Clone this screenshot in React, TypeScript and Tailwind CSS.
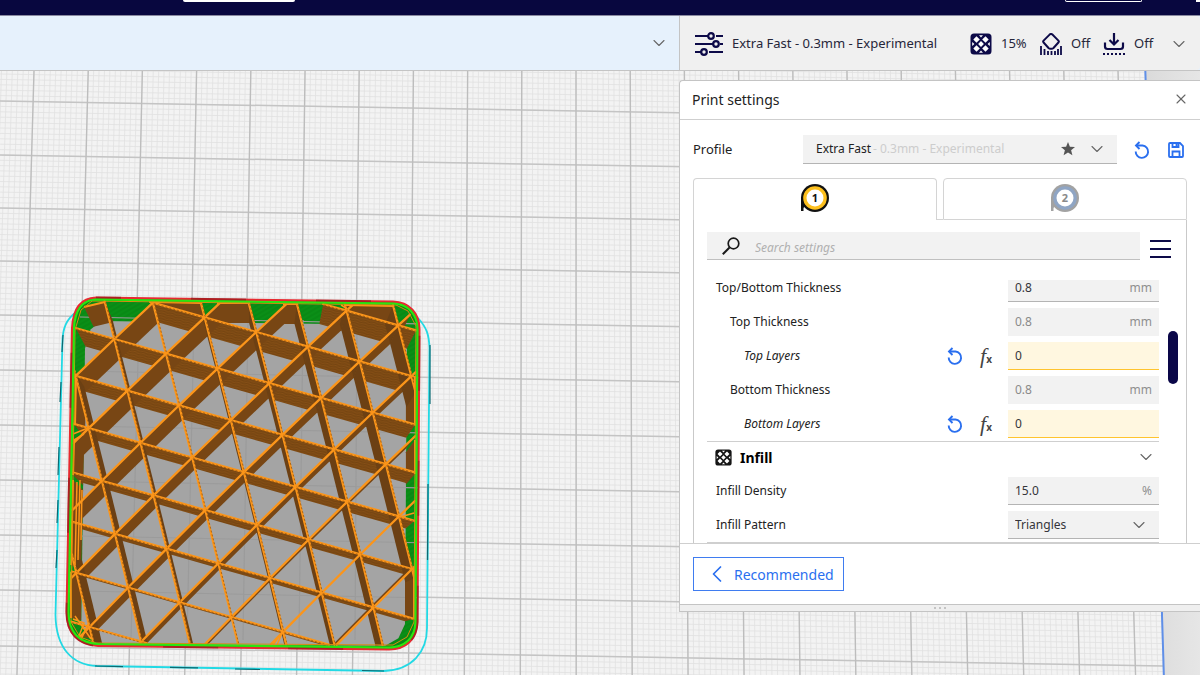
import React from 'react';
import { ChevronDown, ChevronLeft, X } from 'lucide-react';

type Point = [number, number];

/* ---------- Build plate ---------- */

const majorRows = [47, 101, 155, 208, 261, 315, 370, 425, 480, 535, 590, 646, 702];
const ROW_SLOPE = 0.0172;

const columnX = (k: number, y: number) => 34 + 54.2 * k + ((y - 71) * (1.55 * k - 15.3)) / 541;

const plateEdge = (y: number) => 1145 + (y - 71) * 0.0315;

const rowPath = (y: number) => {
  const end = plateEdge(y);
  return `M0 ${y.toFixed(1)}L${end.toFixed(1)} ${(y + end * ROW_SLOPE).toFixed(1)}`;
};

const columnPath = (k: number) => `M${columnX(k, 60).toFixed(1)} 60L${columnX(k, 680).toFixed(1)} 680`;

const majorColumns = Array.from({ length: 22 }, (_, i) => i - 1);
const minorColumns = Array.from({ length: 215 }, (_, i) => (i - 9) / 10);
const minorRows = majorRows.slice(0, -1).flatMap((y, i) =>
  Array.from({ length: 10 }, (_, n) => y + ((majorRows[i + 1] - y) * n) / 10)
);

/* ---------- Sliced model ---------- */

// Inner wall of the part, clockwise from the top left
const outline: Point[] = [
  [92, 301], [396, 305], [408, 311], [416, 326], [414, 622], [407, 637], [393, 645],
  [96, 643], [80, 637], [71, 622], [75, 330], [81, 310],
];

const node = (i: number, j: number): Point => [
  114.3 + 51.7 * i + 13.1 * j,
  339 + 14.7 * i + 51.4 * j + 0.25 * j * j,
];

// Position of the same point on the plate, below the top layer
const base = ([x, y]: Point): Point => [x + (253 - x) * 0.056, y + (659 - y) * 0.056];

// Keeps the part of a segment that is inside the convex outline
const clip = (a: Point, b: Point): [Point, Point] | null => {
  let from = 0;
  let to = 1;
  const dx = b[0] - a[0];
  const dy = b[1] - a[1];
  for (let n = 0; n < outline.length; n++) {
    const p = outline[n];
    const q = outline[(n + 1) % outline.length];
    const nx = -(q[1] - p[1]);
    const ny = q[0] - p[0];
    const distance = (a[0] - p[0]) * nx + (a[1] - p[1]) * ny;
    const speed = dx * nx + dy * ny;
    if (speed === 0) {
      if (distance < 0) return null;
      continue;
    }
    const t = -distance / speed;
    if (speed > 0) from = Math.max(from, t);
    else to = Math.min(to, t);
  }
  if (from >= to) return null;
  return [
    [a[0] + dx * from, a[1] + dy * from],
    [a[0] + dx * to, a[1] + dy * to],
  ];
};

const points = (list: Point[]) => list.map(([x, y]) => `${x.toFixed(1)},${y.toFixed(1)}`).join(' ');

const range = (from: number, to: number) => Array.from({ length: to - from + 1 }, (_, i) => from + i);

type WallKind = 'row' | 'steep' | 'diagonal';

interface Wall {
  a: Point;
  b: Point;
  kind: WallKind;
}

// One wall per cell edge, from each node to its neighbour
const makeWalls = (kind: WallKind, di: number, dj: number): Wall[] =>
  range(-4, 9).flatMap((j) =>
    range(-6, 9).flatMap((i) => {
      const part = clip(node(i, j), node(i + di, j + dj));
      return part ? [{ a: part[0], b: part[1], kind }] : [];
    })
  );

const walls: Wall[] = [
  ...makeWalls('row', 1, 0),
  ...makeWalls('diagonal', -1, 1),
  ...makeWalls('steep', 0, 1),
];

// Stretches where the infill runs along the inner wall
const rim: [Point, Point][] = [
  [[84, 307], [105, 302]],
  [[153, 302], [202, 303]],
  [[217, 303], [250, 303]],
  [[283, 304], [298, 304]],
  [[345, 305], [394, 306]],
  [[415, 376], [415, 424]],
  [[415, 440], [415, 474]],
  [[414, 568], [414, 618]],
  [[76, 378], [75, 425]],
  [[74, 440], [73, 475]],
  [[73, 480], [71, 565]],
  [[71, 572], [71, 618]],
];

const wallFill = { row: 'url(#wall-row)', steep: '#6c4014', diagonal: 'url(#wall-diagonal)' };

const shell = 'M96 298.5L393 302.5C409 303 418.500 314 418.500 329L416.500 622C416 639 405 649 388 648.500L98 645C80 644 67.500 634 67.500 612L73 328C74 309 82 299 96 298.5Z';

const BuildPlate: React.FC = () => (
  <svg
    className="absolute inset-0 h-full w-full"
    viewBox="0 71 1200 604"
    preserveAspectRatio="xMinYMin slice"
    role="img"
    aria-label="Layer preview of the sliced model"
  >
    <defs>
      <linearGradient id="outside" x1="0" x2="1">
        <stop offset="0" stopColor="#dadada" />
        <stop offset="1" stopColor="#e6e6e6" />
      </linearGradient>
      <pattern id="wall-row" width="9" height="5" patternUnits="userSpaceOnUse" patternTransform="rotate(14)">
        <rect width="9" height="5" fill="#764511" />
        <path d="M0 1q4.500 2 9 0M0 3.500q4.500 2 9 0" stroke="#8c5318" strokeWidth="0.8" fill="none" />
      </pattern>
      <pattern id="wall-diagonal" width="8" height="4" patternUnits="userSpaceOnUse" patternTransform="rotate(-43)">
        <rect width="8" height="4" fill="#724212" />
        <path d="M0 1h8M0 3h8" stroke="#824d16" strokeWidth="0.7" />
      </pattern>
      <pattern id="green-wall" width="6" height="4" patternUnits="userSpaceOnUse" patternTransform="rotate(-30)">
        <rect width="6" height="4" fill="#0a8f17" />
        <path d="M0 1h6" stroke="#088012" strokeWidth="0.8" />
      </pattern>
      <clipPath id="part">
        <path d={shell} />
      </clipPath>
    </defs>

    <rect y="60" width="1200" height="620" fill="#f3f3f3" />
    <path d={minorRows.map(rowPath).join('')} stroke="#e1e1e1" strokeWidth="0.8" />
    <path d={minorColumns.map(columnPath).join('')} stroke="#e1e1e1" strokeWidth="0.8" />
    <path d={majorRows.map(rowPath).join('')} stroke="#c4c4c4" strokeWidth="1.5" />
    <path d={majorColumns.map(columnPath).join('')} stroke="#bdbdbd" strokeWidth="1.4" />
    <path d="M1145 60L1164 680H1200V60Z" fill="url(#outside)" />
    <path d="M1145 60L1164 680" stroke="#5f8fe8" strokeWidth="2" />

    {/* Skirt */}
    <g fill="none">
      <path
        d="M76 312C66 320 63 328 62.500 340L55.500 615C56 648 72 665 97 666L384 671C412 670 427 652 427 628L429.500 348C429 335 427 328 418 318"
        stroke="#22d9e4"
        strokeWidth="1.8"
      />
      <path
        d="M63 335L62 352M61 382L60 402M59 447L58 475M58 500L57 523M57 550L56 568M95 666L123 666.600M170 667.300L198 667.800M235 669L260 669.500M362 670.500L384 671M430 345L430 404M428 484L427.500 560"
        stroke="#0d6a72"
        strokeWidth="1.2"
      />
    </g>

    <path d={shell} fill="none" stroke="#e62a30" strokeWidth="4" />
    <path d={shell} fill="none" stroke="#7d1518" strokeWidth="4" strokeDasharray="55 70" strokeDashoffset="30" opacity="0.55" />

    <g clipPath="url(#part)">
      <path d={shell} fill="url(#green-wall)" />
      <polygon points={points(outline.map(base))} fill="#a4a4a4" />
      <path
        d="M80 317L430 324M80 371L430 378M80 426L430 433M80 481L430 488M80 536L430 543M80 591L430 598M139 320L131 640M194 320L187 640M248 320L243 640M303 320L299 640M357 320L355 640"
        stroke="#9b9b9b"
        strokeWidth="1.2"
      />
      {rim.map(([a, b], i) => (
        <polygon key={i} points={points([a, b, base(b), base(a)])} fill="url(#wall-diagonal)" />
      ))}
      {walls.map(({ a, b, kind }, i) => (
        <polygon key={i} points={points([a, b, base(b), base(a)])} fill={wallFill[kind]} />
      ))}
      {walls.map(({ a, b, kind }, i) => (
        <g key={i} fill="none">
          <polyline points={points([a, b])} stroke="#fb951a" strokeWidth="2.3" strokeLinecap="round" />
          {kind !== 'diagonal' && (
            <polyline
              points={points([[a[0] + 1, a[1] + 1], [b[0] + 1, b[1] + 1]])}
              stroke="#7a450e"
              strokeWidth="0.6"
              strokeDasharray="2 2"
            />
          )}
        </g>
      ))}
      {rim.map(([a, b], i) => (
        <polyline key={i} points={points([a, b])} stroke="#fb951a" strokeWidth="2" />
      ))}
      <path
        d="M80 480L78 560M77 482L75 565M82 490L81 540M73 434L88 428M74 440L84 434M73 619L84 623L79 636M75 616L91 639M88 624L80 642M283 631L277 645M283 631L286 645M283 631L273 645M400 517L414 513M346 308L341 305"
        stroke="#fb951a"
        strokeWidth="1.5"
        fill="none"
      />
      <polygon points={points(outline)} fill="none" stroke="#d98a12" strokeWidth="1" strokeLinejoin="round" />
      <path d={shell} fill="none" stroke="#2be510" strokeWidth="4.200" />
    </g>
  </svg>
);

/* ---------- Icons ---------- */

const SlidersIcon: React.FC = () => (
  <svg width="28" height="24" viewBox="0 0 28 24" fill="none" stroke="#0d0a48" strokeWidth="2.200" aria-hidden="true">
    <path d="M0 4h13M21 4h7M0 12h18M25 12h3M0 20h6M14 20h14" />
    <circle cx="16" cy="4" r="2.800" />
    <circle cx="21" cy="12" r="2.800" />
    <circle cx="9" cy="20" r="2.800" />
  </svg>
);

const InfillIcon: React.FC<{ size: number; color: string }> = ({ size, color }) => (
  <svg width={size} height={size} viewBox="0 0 22 22" aria-hidden="true">
    <rect x="0.500" y="0.500" width="21" height="21" rx="3.500" fill={color} />
    <g fill="#fff">
      <path d="M11 8.100L13.900 11L11 13.900L8.100 11Z" />
      <path d="M6.500 3.300L9.800 6.500L6.500 9.800L3.300 6.500Z" />
      <path d="M15.500 3.300L18.700 6.500L15.500 9.800L12.200 6.500Z" />
      <path d="M6.500 12.200L9.800 15.500L6.500 18.700L3.300 15.500Z" />
      <path d="M15.500 12.200L18.700 15.500L15.500 18.700L12.200 15.500Z" />
      <path d="M9 2.200H13L11 4.400Z" />
      <path d="M9 19.800H13L11 17.600Z" />
      <path d="M2.200 9V13L4.400 11Z" />
      <path d="M19.800 9V13L17.600 11Z" />
    </g>
  </svg>
);

const SupportIcon: React.FC = () => (
  <svg width="22" height="22" viewBox="0 0 22 22" fill="none" stroke="#0d0a48" strokeWidth="2" aria-hidden="true">
    <path d="M9.600 1.600L3.600 7.600Q2.700 8.500 3.600 9.500L8.500 15Q9.400 15.800 10.300 15.800H11.700Q12.600 15.800 13.500 15L18.400 9.500Q19.300 8.500 18.400 7.600L12.400 1.600Q11 0.400 9.600 1.600Z" />
    <path d="M1 13v9M4.500 16v6M8 18v4M11.500 18v4M15 18v4M18 16v6M21 13v9" strokeWidth="1.800" />
  </svg>
);

const AdhesionIcon: React.FC = () => (
  <svg width="22" height="22" viewBox="0 0 22 22" fill="none" stroke="#0d0a48" strokeWidth="2.200" aria-hidden="true">
    <path d="M11 0v11M6.500 7L11 11.500L15.500 7M2 9.500V13.500Q2 16 4.500 16H17.500Q20 16 20 13.500V9.500" />
    <path d="M0 21h22" strokeWidth="2" strokeDasharray="2 2" />
  </svg>
);

const ResetIcon: React.FC = () => (
  <svg width="16" height="18" viewBox="0 0 16 18" fill="none" stroke="#2a6fef" strokeWidth="1.900" aria-hidden="true">
    <path d="M2.500 4.500H8.500A6.200 6.200 0 1 1 1.700 10.500" />
    <path d="M5.500 1L2 4.500L5.500 8" />
  </svg>
);

const SaveIcon: React.FC = () => (
  <svg width="16" height="16" viewBox="0 0 16 16" fill="none" stroke="#2a6fef" strokeWidth="1.800" aria-hidden="true">
    <path d="M2 1H12L15 4V14Q15 15 14 15H2Q1 15 1 14V2Q1 1 2 1Z" />
    <path d="M4.500 1V5H10.500V1M8.500 2V4M4.500 15V9.500H11.500V15" />
  </svg>
);

const SearchIcon: React.FC = () => (
  <svg width="18" height="18" viewBox="0 0 18 18" fill="none" stroke="#191919" strokeWidth="1.700" aria-hidden="true">
    <circle cx="11.500" cy="6.500" r="5.300" />
    <path d="M7.500 10.500L0.800 17.200" strokeWidth="2" />
  </svg>
);

const StarIcon: React.FC = () => (
  <svg width="14" height="14" viewBox="0 0 14 14" fill="#555" aria-hidden="true">
    <path d="M7 0L8.900 4.700L14 5L10.100 8.300L11.400 13.300L7 10.500L2.600 13.300L3.900 8.300L0 5L5.100 4.700Z" />
  </svg>
);

const ExtruderIcon: React.FC<{ label: string; rim: string; spool: string; ink: string }> = ({ label, rim, spool, ink }) => (
  <svg width="30" height="28" viewBox="0 0 30 28" aria-hidden="true">
    <path d="M1 13H5V22L3.500 24V27H1Z" fill={rim} />
    <circle cx="15" cy="14" r="14" fill={rim} />
    <circle cx="15" cy="14" r="11.800" fill={spool} />
    <circle cx="15" cy="14" r="8.500" fill="#fff" />
    <text x="15" y="18" textAnchor="middle" fontSize="11" fontWeight="700" fill={ink}>
      {label}
    </text>
  </svg>
);

/* ---------- Settings ---------- */

interface Setting {
  id: string;
  label: string;
  value: string;
  unit?: string;
  indent: string;
  state: 'normal' | 'disabled' | 'changed';
}

const thicknessSettings: Setting[] = [
  { id: 'top-bottom-thickness', label: 'Top/Bottom Thickness', value: '0.8', unit: 'mm', indent: 'pl-[9px]', state: 'normal' },
  { id: 'top-thickness', label: 'Top Thickness', value: '0.8', unit: 'mm', indent: 'pl-[23px]', state: 'disabled' },
  { id: 'top-layers', label: 'Top Layers', value: '0', indent: 'pl-[37px]', state: 'changed' },
  { id: 'bottom-thickness', label: 'Bottom Thickness', value: '0.8', unit: 'mm', indent: 'pl-[23px]', state: 'disabled' },
  { id: 'bottom-layers', label: 'Bottom Layers', value: '0', indent: 'pl-[37px]', state: 'changed' },
];

const fieldStyle = {
  normal: 'border-[#b4b4b4] bg-[#f2f2f2] text-[#35353a]',
  disabled: 'border-[#f2f2f2] bg-[#f2f2f2] text-[#8a8a8a]',
  changed: 'border-[#ffc42e] bg-[#fff7e0] text-[#35353a]',
};

const SettingRow: React.FC<{ setting: Setting }> = ({ setting }) => {
  const changed = setting.state === 'changed';
  return (
    <div className="flex h-[34px] items-center">
      <label htmlFor={setting.id} className={`flex-1 ${setting.indent} ${changed ? 'italic' : ''}`}>
        {setting.label}
      </label>
      {changed && (
        <div className="mr-3 flex items-center gap-[17px]">
          <button aria-label={`Reset ${setting.label}`}>
            <ResetIcon />
          </button>
          <button aria-label={`Formula of ${setting.label}`} className="flex w-4 items-baseline text-[#444]">
            <span className="font-['Liberation_Serif',serif] text-[22px] leading-6 italic">f</span>
            <span className="text-[10px] leading-3 font-bold">x</span>
          </button>
        </div>
      )}
      <div className={`flex h-7 w-[151px] items-center border-b px-[7px] ${fieldStyle[setting.state]}`}>
        <input
          id={setting.id}
          defaultValue={setting.value}
          disabled={setting.state === 'disabled'}
          className="min-w-0 flex-1 bg-transparent outline-none"
        />
        {setting.unit && <span className="text-[#8f8f8f]">{setting.unit}</span>}
      </div>
    </div>
  );
};

const PrintSettings: React.FC = () => (
  <section className="relative mt-[9px] w-[521px] rounded-tl border border-r-0 border-[#c4c4c4] bg-white text-[#222]">
    <div className="flex h-[39px] items-center justify-between border-b border-[#cfcfcf] pr-[11px] pb-[2px] pl-3">
      <h2 className="text-[14px]">Print settings</h2>
      <button aria-label="Close">
        <X size={16} strokeWidth={1.6} color="#666" />
      </button>
    </div>

    <div className="px-[13px] pt-[15px]">
      {/* Profile */}
      <div className="flex items-center">
        <span id="profile-label" className="w-[110px] text-[13px]">Profile</span>
        <button aria-labelledby="profile-label" className="flex h-[29px] w-[314px] items-center border-b border-[#b4b4b4] bg-[#f2f2f2] pr-[10px] pl-[13px] text-[12px]">
          <span>Extra Fast</span>
          <span className="flex-1 pl-[2px] text-left text-[#cdcdcd]">- 0.3mm - Experimental</span>
          <StarIcon />
          <ChevronDown size={20} strokeWidth={1.3} color="#666" className="ml-3" />
        </button>
        <button aria-label="Discard changes" className="ml-[17px]">
          <ResetIcon />
        </button>
        <button aria-label="Save profile" className="ml-[18px]">
          <SaveIcon />
        </button>
      </div>

      {/* Extruder tabs */}
      <div className="mt-[14px] flex" role="tablist">
        <button role="tab" aria-selected="true" aria-label="Extruder 1" className="flex h-[42px] flex-1 items-center justify-center rounded-t border border-b-0 border-[#d4d4d4] pb-[3px]">
          <ExtruderIcon label="1" rim="#111" spool="#fdc01e" ink="#111" />
        </button>
        <div className="w-[6px] border-b border-[#d4d4d4]" />
        <button role="tab" aria-selected="false" aria-label="Extruder 2" className="flex h-[42px] flex-1 items-center justify-center rounded-t border border-[#d4d4d4] pb-[2px]">
          <ExtruderIcon label="2" rim="#a2a2a2" spool="#8fa5c4" ink="#8a8a8a" />
        </button>
      </div>

      <div className="border-x border-[#c9c9c9] px-[13px] pt-3 text-[12px]">
        <div className="flex items-center justify-between">
          <div className="flex h-7 w-[433px] items-center border-b border-[#c0c0c0] bg-[#f2f2f2] pl-[15px]">
            <SearchIcon />
            <input aria-label="Search settings" placeholder="Search settings" className="ml-[15px] flex-1 bg-transparent pt-1 italic outline-none placeholder:text-[#b0b0b0]" />
          </div>
          <button aria-label="Setting visibility" className="mt-[5px] mr-[2px] flex w-[21px] flex-col gap-[6px]">
            <span className="h-[2px] bg-[#0d0a48]" />
            <span className="h-[2px] bg-[#0d0a48]" />
            <span className="h-[2px] bg-[#0d0a48]" />
          </button>
        </div>

        <div className="relative mt-5">
          <div className="w-[452px] overflow-hidden">
            <div className="-mt-[9px]">
              {thicknessSettings.map((setting) => (
                <SettingRow key={setting.id} setting={setting} />
              ))}
              <button className="flex h-[33px] w-full items-center border-t border-[#cfcfcf] pr-[3px] pb-[2px] pl-2 text-left">
                <InfillIcon size={17} color="#151515" />
                <span className="flex-1 pl-2 text-[14px] font-bold text-black">Infill</span>
                <ChevronDown size={20} strokeWidth={1.3} color="#666" />
              </button>
              <SettingRow setting={{ id: 'infill-density', label: 'Infill Density', value: '15.0', unit: '%', indent: 'pl-[9px]', state: 'normal' }} />
              <div className="flex h-[34px] items-center">
                <label htmlFor="infill-pattern" className="flex-1 pl-[9px]">Infill Pattern</label>
                <div className="relative w-[151px]">
                  <select id="infill-pattern" className="h-7 w-full appearance-none border-b border-[#b4b4b4] bg-[#f2f2f2] px-[7px] text-[#35353a] outline-none">
                    <option>Triangles</option>
                  </select>
                  <ChevronDown size={20} strokeWidth={1.3} color="#666" className="pointer-events-none absolute top-1 right-[10px]" />
                </div>
              </div>
              <div className="border-t border-[#cfcfcf]" />
            </div>
          </div>
          <div className="absolute top-[51px] right-[-5px] h-[53px] w-[10px] rounded-full bg-[#0a0748]" />
        </div>
      </div>
    </div>

    <div className="border-t border-[#cfcfcf] px-[13px] py-[13px]">
      <button className="flex h-[34px] w-[151px] items-center border border-[#3f7cf0] pl-[9px] text-[14px] text-[#2a6fef]">
        <ChevronLeft size={28} strokeWidth={1.5} />
        <span className="pl-[3px]">Recommended</span>
      </button>
    </div>
    <div className="flex h-[7px] items-center justify-center gap-[3px] border-t border-[#c4c4c4] bg-[#efefef]">
      <span className="h-[2px] w-[2px] bg-[#c4c4c4]" />
      <span className="h-[2px] w-[2px] bg-[#c4c4c4]" />
      <span className="h-[2px] w-[2px] bg-[#c4c4c4]" />
    </div>
  </section>
);

const App: React.FC = () => (
  <div className="flex h-screen flex-col overflow-hidden bg-[#f3f3f3] font-['Noto_Sans',sans-serif]">
    {/* Header */}
    <header className="flex h-4 shrink-0 items-start border-b border-[#8a8aa0] bg-[#08073f] pl-[183px]">
      <div className="h-[2px] w-28 rounded-b bg-white" />
      <div className="ml-auto h-[2px] w-[77px] rounded-b border border-t-0 border-white" />
      <div className="ml-[54px] h-[2px] w-1 bg-white" />
    </header>

    {/* Stage bar */}
    <div className="flex h-[55px] shrink-0 border-b border-[#c4c4c4] bg-[#e6f1fc]">
      <button aria-label="Show configuration" className="flex flex-1 items-center justify-end pr-[10px]">
        <ChevronDown size={20} strokeWidth={1.3} color="#666" />
      </button>
      <button className="flex w-[521px] items-center rounded-r border-l border-[#c4c4c4] bg-[#f0f0f0] pt-[2px] pr-[11px] pl-[15px] text-[13px] text-[#26263a]">
        <SlidersIcon />
        <span className="flex-1 pl-[9px] text-left">Extra Fast - 0.3mm - Experimental</span>
        <InfillIcon size={22} color="#0d0a48" />
        <span className="w-[48px] pl-[9px] text-left">15%</span>
        <SupportIcon />
        <span className="w-[41px] pl-[9px] text-left">Off</span>
        <AdhesionIcon />
        <span className="w-[44px] pl-[9px] text-left">Off</span>
        <ChevronDown size={20} strokeWidth={1.3} color="#666" />
      </button>
    </div>

    {/* Viewport */}
    <main className="relative flex flex-1 items-start justify-end">
      <BuildPlate />
      <PrintSettings />
    </main>
  </div>
);

export default App;
